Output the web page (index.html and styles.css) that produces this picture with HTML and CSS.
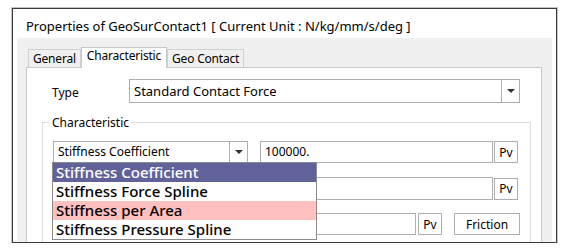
FILE: index.html
```html
<!DOCTYPE html>
<html lang="en">
<head>
  <meta charset="UTF-8" />
  <title>Properties of GeoSurContact1</title>
  <link rel="stylesheet" href="styles.css">
</head>
<body>
  <div class="window">
    <div class="title">Properties of GeoSurContact1 [ Current Unit : N/kg/mm/s/deg ]</div>

    <div class="panel">
      <div class="tabs">
        <div class="tab">General</div>
        <div class="tab active">Characteristic</div>
        <div class="tab">Geo Contact</div>
      </div>

      <div class="page">
        <div class="type-row">
          <span class="type-label">Type</span>
          <div class="combo type-combo">
            <span class="combo-text">Standard Contact Force</span>
            <span class="combo-btn"><i class="arrow"></i></span>
          </div>
        </div>

        <fieldset class="group">
          <legend>Characteristic</legend>

          <div class="row row1">
            <div class="combo stiff-combo">
              <span class="combo-text">Stiffness Coefficient</span>
              <span class="combo-btn"><i class="arrow"></i></span>
              <ul class="droplist">
                <li class="selected">Stiffness Coefficient</li>
                <li>Stiffness Force Spline</li>
                <li class="marked">Stiffness per Area</li>
                <li>Stiffness Pressure Spline</li>
              </ul>
            </div>
            <div class="field wide">100000.</div>
            <button class="btn pv">Pv</button>
          </div>

          <div class="row row2">
            <span class="spacer"></span>
            <div class="field wide"></div>
            <button class="btn pv">Pv</button>
          </div>

          <div class="row row3">
            <span class="spacer"></span>
            <div class="field short"></div>
            <button class="btn pv">Pv</button>
            <button class="btn friction">Friction</button>
          </div>
        </fieldset>
      </div>
    </div>
  </div>
</body>
</html>
```

FILE: styles.css
```css
body {
  margin: 0;
  background: #ffffff;
  font-family: "Noto Sans", "Open Sans", sans-serif;
  color: #000000;
}
.window {
  margin: 8px 0 0 12px;
  width: 543px;
  height: 233px;
  border: 1px solid #3a3a3a;
  box-shadow: 0 0 0 1px #c4c4c4;
  background: #ffffff;
  display: flex;
  flex-direction: column;
  overflow: hidden;
}
.title {
  height: 29px;
  line-height: 34px;
  padding-left: 13px;
  font-size: 13px;
  white-space: nowrap;
}
.panel {
  flex: 1;
  margin: 0 4px;
  background: #f0f0f0;
  padding: 9px 0 0 9px;
  overflow: hidden;
}
.tabs {
  display: flex;
  align-items: flex-end;
  height: 20px;
  padding-left: 2px;
}
.tab {
  height: 18px;
  line-height: 18px;
  padding: 0 4px;
  font-size: 12px;
  letter-spacing: -0.2px;
  border: 1px solid #d0d0d0;
  border-bottom: none;
  background: #f0f0f0;
  box-sizing: border-box;
}
.tab.active {
  height: 21px;
  margin-bottom: -1px;
  background: #ffffff;
  border-color: #c8c8c8;
  line-height: 16px;
  padding: 0 5px;
  position: relative;
}
.page {
  width: 516px;
  height: 200px;
  background: #ffffff;
  border: 1px solid #c8c8c8;
  box-sizing: border-box;
  padding: 11px 0 0 15px;
}
.type-row {
  display: flex;
  align-items: center;
  height: 24px;
}
.type-label {
  width: 77px;
  padding-left: 10px;
  font-size: 12px;
  padding-top: 3px;
}
.combo {
  display: flex;
  border: 1px solid #adadad;
  background: #ffffff;
  box-sizing: border-box;
  font-size: 12px;
  position: relative;
}
.combo-text {
  flex: 1;
  padding-left: 4px;
  white-space: nowrap;
}
.combo-btn {
  width: 17px;
  border-left: 1px solid #adadad;
  display: flex;
  align-items: center;
  justify-content: center;
}
.arrow {
  width: 0;
  height: 0;
  border-left: 4px solid transparent;
  border-right: 4px solid transparent;
  border-top: 4px solid #333333;
}
.type-combo {
  width: 391px;
  height: 24px;
  line-height: 22px;
  font-size: 13px;
}
.group {
  margin: 11px 0 0 0;
  width: 489px;
  height: 140px;
  border: 1px solid #dcdcdc;
  box-sizing: border-box;
  padding: 10px 0 0 10px;
}
.group legend {
  font-size: 12px;
  padding: 0 2px;
  margin-left: -3px;
}
.row {
  display: flex;
  align-items: center;
}
.row1 {
  height: 22px;
}
.row2 {
  height: 23px;
  margin-top: 14px;
}
.row3 {
  height: 22px;
  margin-top: 13px;
}
.stiff-combo {
  width: 195px;
  height: 22px;
  line-height: 20px;
  margin-right: 12px;
}
.spacer {
  width: 209px;
}
.field {
  height: 100%;
  border: 1px solid #adadad;
  box-sizing: border-box;
  font-size: 12px;
  line-height: 20px;
  padding-left: 4px;
}
.field.wide {
  width: 233px;
}
.row2 .field.wide {
  width: 231px;
}
.field.short {
  width: 154px;
}
.btn {
  margin: 0;
  padding: 0;
  font-family: inherit;
  font-size: 12px;
  background: #ffffff;
  border: 1px solid #adadad;
  box-sizing: border-box;
  height: 22px;
}
.pv {
  width: 24px;
  margin-left: 1px;
}
.row3 .pv {
  margin-left: 2px;
}
.friction {
  width: 66px;
  margin-left: 12px;
}
.droplist {
  position: absolute;
  top: 20px;
  left: -2px;
  width: 265px;
  margin: 0;
  padding: 0;
  list-style: none;
  background: #ffffff;
  border: 1px solid #8c8c8c;
  box-sizing: border-box;
  z-index: 2;
}
.droplist li {
  height: 19px;
  line-height: 19px;
  padding-left: 3px;
  font-size: 15px;
  font-weight: 500;
}
.droplist li.selected {
  background: #62629a;
  color: #ffffff;
}
.droplist li.marked {
  background: #ffc0c0;
}
```
